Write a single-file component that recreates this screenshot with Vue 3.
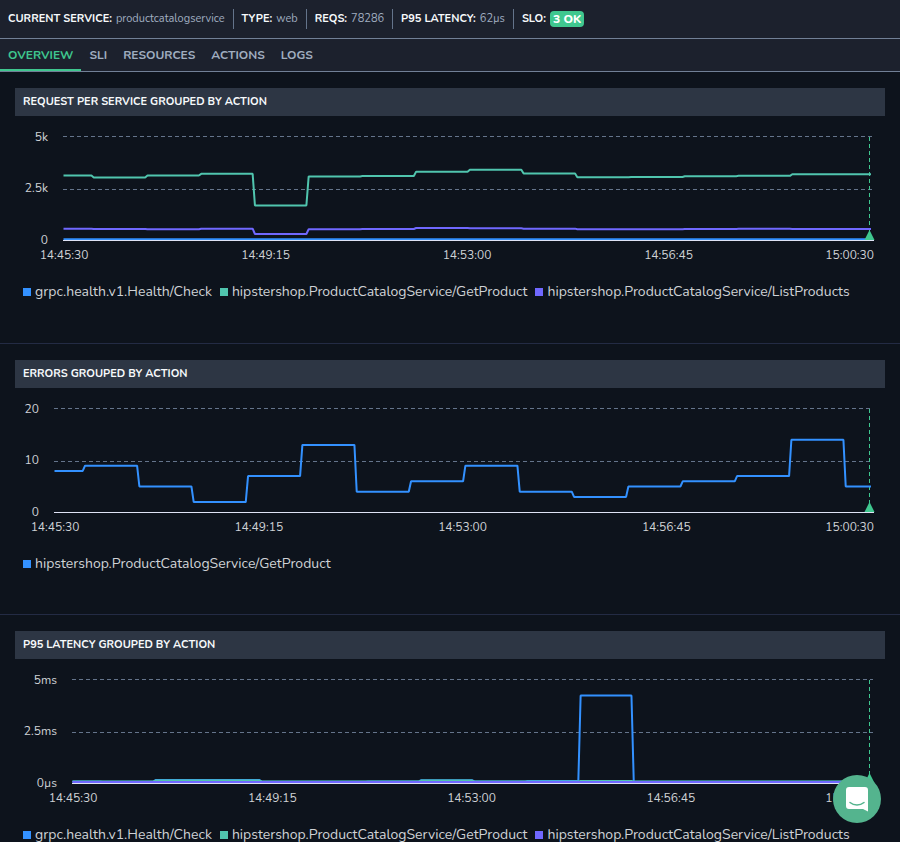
<template>
  <div class="page">
    <header class="service-bar">
      <dl class="facts">
        <div v-for="fact in facts" :key="fact.label" class="fact">
          <dt>{{ fact.label }}:</dt>
          <dd :class="{ badge: fact.badge }">{{ fact.value }}</dd>
        </div>
      </dl>
    </header>

    <nav class="tabs">
      <a
        v-for="tab in tabs"
        :key="tab"
        href="#"
        class="tab"
        :class="{ active: tab === activeTab }"
        @click.prevent="activeTab = tab"
      >{{ tab }}</a>
    </nav>

    <main ref="mainEl">
      <section v-for="chart in charts" :key="chart.title" class="panel">
        <h2>{{ chart.title }}</h2>
        <svg class="chart" :width="width" height="156" role="img" :aria-label="chart.title">
          <!-- grid -->
          <line
            v-for="y in [20.5, 73.5]"
            :key="y"
            class="grid"
            :x1="chart.left"
            :x2="width - 12"
            :y1="y"
            :y2="y"
          />
          <text
            v-for="(label, i) in chart.yLabels"
            :key="label"
            class="tick"
            text-anchor="end"
            :x="chart.left - 15"
            :y="[25, 76, 128][i]"
          >{{ label }}</text>

          <!-- "now" marker -->
          <line class="marker" :x1="width - 15.5" :x2="width - 15.5" y1="21" y2="115" />

          <polyline
            v-for="s in chart.series"
            :key="s.name"
            class="series"
            :stroke="s.color"
            :points="points(chart, s.values)"
          />
          <line class="axis" :x1="chart.left" :x2="width - 11" :y1="ZERO" :y2="ZERO" />
          <path class="arrow" :d="`M${width - 15.5} 114l5 10h-10z`" />

          <text
            v-for="(time, i) in times"
            :key="time"
            class="tick"
            :text-anchor="i === 4 ? 'end' : 'middle'"
            :x="i === 4 ? width - 11 : chart.left + 1 + i * 3.75 * step(chart)"
            y="143"
          >{{ time }}</text>
        </svg>
        <ul class="legend">
          <li v-for="s in chart.series" :key="s.name">
            <span class="swatch" :style="{ background: s.color }"></span>{{ s.name }}
          </li>
        </ul>
      </section>
    </main>

    <button class="chat" type="button" aria-label="Open chat">
      <svg width="22" height="25" viewBox="0 0 22 25">
        <path d="M3 0h16a3 3 0 0 1 3 3v21.500l-5-2.500H3a3 3 0 0 1-3-3V3a3 3 0 0 1 3-3z" fill="#fff" />
        <path d="M4 15.500c4 3.300 10 3.300 14 0" fill="none" stroke="#54b48e" stroke-width="1.500" stroke-linecap="round" />
      </svg>
    </button>
  </div>
</template>

<script setup>
import { ref, onMounted, onBeforeUnmount } from 'vue';

const BLUE = '#3391ff';
const TEAL = '#50c5ae';
const PURPLE = '#7068ff';

// vertical geometry of the plot area
const ZERO = 124.5;
const PLOT_HEIGHT = 104;

const facts = [
  { label: 'CURRENT SERVICE', value: 'productcatalogservice' },
  { label: 'TYPE', value: 'web' },
  { label: 'REQS', value: '78286' },
  { label: 'P95 LATENCY', value: '62µs' },
  { label: 'SLO', value: '3 OK', badge: true }
];

const tabs = ['OVERVIEW', 'SLI', 'RESOURCES', 'ACTIONS', 'LOGS'];
const activeTab = ref('OVERVIEW');

const times = ['14:45:30', '14:49:15', '14:53:00', '14:56:45', '15:00:30'];

const HEALTH = 'grpc.health.v1.Health/Check';
const GET = 'hipstershop.ProductCatalogService/GetProduct';
const LIST = 'hipstershop.ProductCatalogService/ListProducts';

const charts = [
  {
    title: 'REQUEST PER SERVICE GROUPED BY ACTION',
    left: 48,
    max: 5000,
    yLabels: ['5k', '2.5k', '0'],
    series: [
      { name: HEALTH, color: BLUE, values: Array(16).fill(65) },
      { name: GET, color: TEAL, values: [3125, 3030, 3125, 3205, 1683, 3080, 3100, 3310, 3405, 3220, 3040, 3055, 3090, 3110, 3185, 3185] },
      { name: LIST, color: PURPLE, values: [567, 553, 540, 567, 312, 540, 553, 600, 585, 570, 540, 545, 553, 560, 550, 550] }
    ]
  },
  {
    title: 'ERRORS GROUPED BY ACTION',
    left: 39,
    max: 20,
    yLabels: ['20', '10', '0'],
    series: [
      { name: GET, color: BLUE, values: [8, 9, 5, 2, 7, 13, 4, 6, 9, 4, 3, 5, 6, 7, 14, 5] }
    ]
  },
  {
    title: 'P95 LATENCY GROUPED BY ACTION',
    left: 57,
    max: 5,
    yLabels: ['5ms', '2.5ms', '0µs'],
    series: [
      { name: HEALTH, color: BLUE, values: [0.1, 0.08, 0.17, 0.17, 0.08, 0.08, 0.1, 0.16, 0.1, 0.12, 4.23, 0.08, 0.08, 0.08, 0.08, 0.08] },
      { name: GET, color: TEAL, values: [0.1, 0.1, 0.14, 0.14, 0.1, 0.1, 0.1, 0.14, 0.1, 0.1, 0.12, 0.1, 0.1, 0.1, 0.1, 0.1] },
      { name: LIST, color: PURPLE, values: Array(16).fill(0.07) }
    ]
  }
];

const mainEl = ref(null);
const width = ref(870);
let observer;

// pixels per minute
const step = (chart) => (width.value - 16 - chart.left) / 15;

// each value holds for a minute, with a short ramp to the next one
const points = (chart, values) => {
  const w = step(chart);
  const y = (v) => ZERO - (v / chart.max) * PLOT_HEIGHT;
  const out = [`${chart.left + 0.5},${y(values[0])}`];
  for (let i = 1; i < values.length; i++) {
    const x = chart.left + 0.5 + w * (i - 0.48);
    out.push(`${x},${y(values[i - 1])}`, `${x + 2.3},${y(values[i])}`);
  }
  out.push(`${width.value - 14},${y(values[values.length - 1])}`);
  return out.join(' ');
};

const measure = () => {
  width.value = mainEl.value.clientWidth - 30;
};

onMounted(() => {
  measure();
  observer = new ResizeObserver(measure);
  observer.observe(mainEl.value);
});

onBeforeUnmount(() => observer.disconnect());
</script>

<style>
body {
  margin: 0;
  background: #0d131c;
}
</style>

<style scoped>
.page {
  font-family: Nunito, "Open Sans", "Noto Sans", sans-serif;
  color: #cfd2d6;
}

/* Service summary */
.service-bar {
  background: #1c212d;
  border-bottom: 1px solid #718096;
}

.facts {
  display: flex;
  align-items: center;
  height: 38px;
  margin: 0;
  font-size: 11px;
  line-height: 20px;
}

.fact {
  display: flex;
  align-items: center;
  gap: 4px;
  padding: 0 8px;
  white-space: nowrap;
}

.fact + .fact {
  border-left: 1px solid #64748b;
}

.fact dt {
  color: #f7fafc;
  font-weight: 700;
}

.fact dd {
  margin: 0;
  color: #a0aec0;
}

.fact .badge {
  padding: 0 3px;
  border-radius: 4px;
  background: #3fc78f;
  color: #fff;
  font-size: 12px;
  line-height: 16px;
  font-weight: 800;
}

/* Tabs */
.tabs {
  display: flex;
  height: 32px;
  background: #1c212d;
  border-bottom: 1px solid #718096;
}

.tab {
  box-sizing: border-box;
  padding: 0 8px;
  border-bottom: 2px solid transparent;
  color: #a0aec0;
  font-size: 12px;
  font-weight: 700;
  line-height: 32px;
  text-decoration: none;
}

.tab.active {
  color: #3fc78f;
  border-bottom-color: #3fc78f;
}

/* Chart panels */
.panel {
  padding: 16px 15px 43px;
  border-bottom: 1px solid #232b44;
}

.panel + .panel {
  padding-bottom: 42px;
}

.panel:last-child {
  padding-bottom: 0;
  border-bottom: none;
}

.panel h2 {
  margin: 0;
  padding: 0 8px;
  background: #2d3644;
  color: #f7fafc;
  font-size: 11px;
  font-weight: 700;
  line-height: 28px;
}

.chart {
  display: block;
}

.grid {
  stroke: #64748b;
  stroke-dasharray: 4 3;
}

.axis {
  stroke: #dfe3f5;
}

.marker {
  stroke: #3fc78f;
  stroke-dasharray: 4 3;
}

.arrow {
  fill: #3fc78f;
}

.series {
  fill: none;
  stroke-width: 2;
  stroke-linejoin: bevel;
}

.tick {
  fill: #cfd2d6;
  font-size: 12px;
}

.legend {
  display: flex;
  flex-wrap: wrap;
  gap: 8px;
  margin: 0;
  padding: 12px 8px 0;
  list-style: none;
  font-size: 14px;
  line-height: 16px;
}

.legend li {
  display: flex;
  align-items: center;
  gap: 4px;
  white-space: nowrap;
}

.swatch {
  width: 8px;
  height: 8px;
}

/* Chat launcher floats over the page */
.chat {
  position: fixed;
  right: 19px;
  bottom: 19px;
  display: flex;
  align-items: center;
  justify-content: center;
  width: 48px;
  height: 48px;
  padding: 0;
  border: none;
  border-radius: 50%;
  background: #54b48e;
  cursor: pointer;
}
</style>
